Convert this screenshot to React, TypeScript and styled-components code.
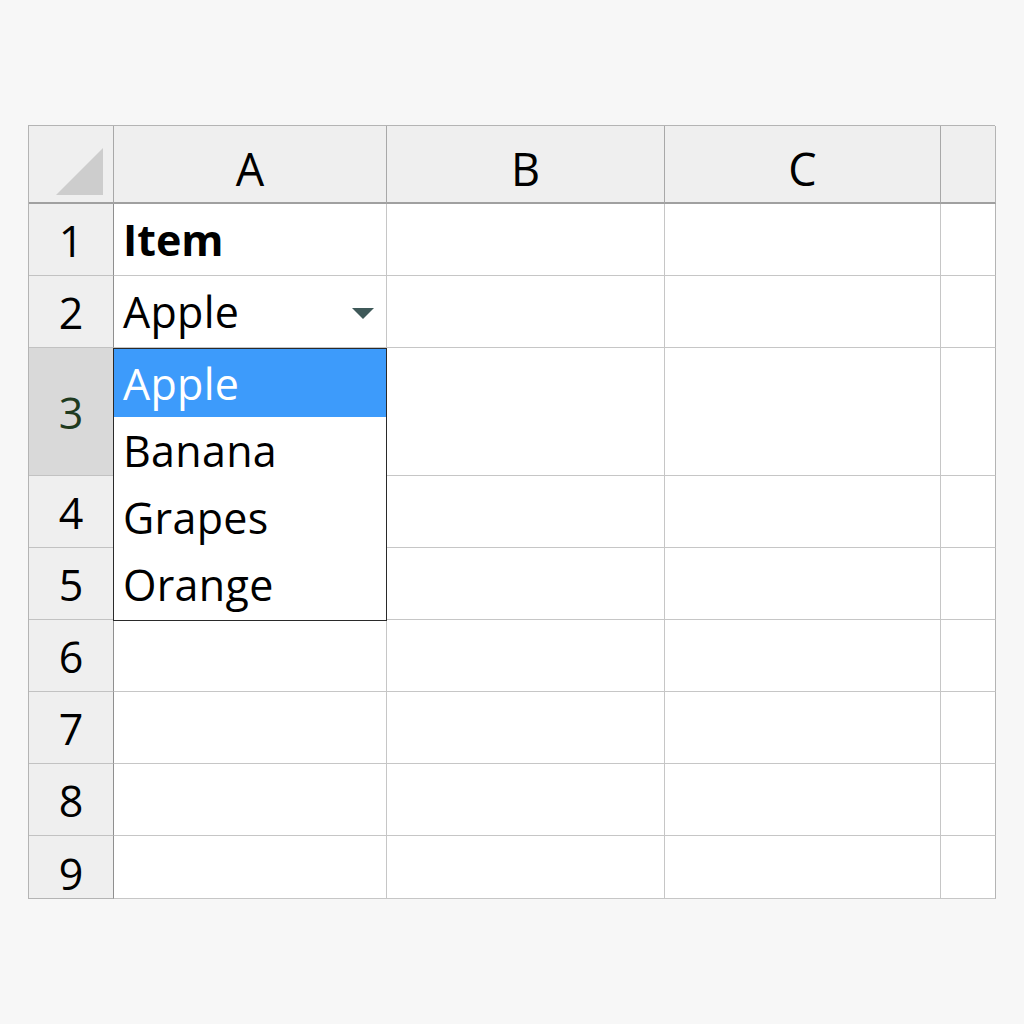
import { Fragment } from "react";
import styled, { createGlobalStyle } from "styled-components";

// === estilos base ===
const GlobalStyle = createGlobalStyle`
	html, body {
		margin: 0;
		padding: 0;
		background: #f7f7f7;
		font-family: "Open Sans", "Noto Sans", sans-serif;
	}
`;

const Page = styled.div`
	width: 1024px;
	height: 1024px;
	padding: 125px 0 0 28px;
	box-sizing: border-box;
`;

const Sheet = styled.div`
	position: relative;
	display: grid;
	grid-template-columns: 85px 273px 278px 276px 55px;
	grid-template-rows: 78px 72px 72px 128px 72px 72px 72px 72px 72px 63px;
	width: 967px;
	box-sizing: border-box;
	border-left: 1px solid #b4b4b4;
	border-top: 1px solid #b4b4b4;
	background: #ffffff;
`;

const Cell = styled.div<{ $bold?: boolean }>`
	box-sizing: border-box;
	border-right: 1px solid #c6c6c6;
	border-bottom: 1px solid #c6c6c6;
	display: flex;
	align-items: center;
	justify-content: space-between;
	padding: 0 12px 0 9px;
	font-size: 43px;
	font-weight: ${(p) => (p.$bold ? 700 : 400)};
	letter-spacing: ${(p) => (p.$bold ? "0" : "0.3px")};
	color: #000;
	background: #fff;
`;

const LastCell = styled(Cell)`
	border-right-color: #b4b4b4;
`;

const ColHeader = styled.div<{ $last?: boolean }>`
	box-sizing: border-box;
	background: #efefef;
	border-right: 1px solid ${(p) => (p.$last ? "#b4b4b4" : "#a8a8a8")};
	border-bottom: 2px solid #a0a0a0;
	display: flex;
	align-items: center;
	justify-content: center;
	padding-top: 8px;
	font-size: 45px;
	color: #000;
`;

const Corner = styled.div`
	box-sizing: border-box;
	background: #efefef;
	border-right: 1px solid #a8a8a8;
	border-bottom: 2px solid #a0a0a0;
	display: flex;
	align-items: flex-end;
	justify-content: flex-end;
	padding: 0 10px 7px 0;
`;

const Triangle = styled.div`
	width: 0;
	height: 0;
	border-left: 47px solid transparent;
	border-bottom: 47px solid #cdcdcd;
`;

const RowHeader = styled.div<{ $active?: boolean; $last?: boolean }>`
	box-sizing: border-box;
	background: ${(p) => (p.$active ? "#d9d9d9" : "#efefef")};
	border-right: 1px solid #8f8f8f;
	border-bottom: 1px solid ${(p) => (p.$last ? "#b4b4b4" : "#c2c2c2")};
	display: flex;
	align-items: center;
	justify-content: center;
	padding-top: ${(p) => (p.$last ? "12px" : "2px")};
	font-size: 43px;
	color: ${(p) => (p.$active ? "#1f3b1f" : "#000")};
`;

const Arrow = styled.div`
	width: 0;
	height: 0;
	border-left: 11px solid transparent;
	border-right: 11px solid transparent;
	border-top: 11px solid #3f5959;
	margin-top: 4px;
`;

const DropList = styled.div`
	position: absolute;
	left: 84px;
	top: 222px;
	width: 274px;
	height: 273px;
	box-sizing: border-box;
	border: 1px solid #2a2a2a;
	background: #fff;
	display: flex;
	flex-direction: column;
`;

const Option = styled.div<{ $selected?: boolean }>`
	height: ${(p) => (p.$selected ? "68px" : "67px")};
	display: flex;
	align-items: center;
	padding-left: 9px;
	font-size: 43px;
	letter-spacing: 0.3px;
	color: ${(p) => (p.$selected ? "#fff" : "#000")};
	background: ${(p) => (p.$selected ? "#3d9bfb" : "transparent")};
`;

const columns = ["A", "B", "C", ""];
const options = ["Apple", "Banana", "Grapes", "Orange"];
const rows = [1, 2, 3, 4, 5, 6, 7, 8, 9];

// === componente principal ===
export default function App() {
	return (
		<>
			<GlobalStyle />
			<Page>
				<Sheet>
					<Corner>
						<Triangle />
					</Corner>
					{columns.map((c, i) => (
						<ColHeader key={i} $last={i === columns.length - 1}>
							{c}
						</ColHeader>
					))}

					{rows.map((r) => (
						<Fragment key={r}>
							<RowHeader $active={r === 3} $last={r === 9}>
								{r}
							</RowHeader>
							<Cell $bold={r === 1}>
								{r === 1 ? "Item" : r === 2 ? "Apple" : ""}
								{r === 2 && <Arrow />}
							</Cell>
							<Cell />
							<Cell />
							<LastCell />
						</Fragment>
					))}

					<DropList>
						{options.map((o, i) => (
							<Option key={o} $selected={i === 0}>
								{o}
							</Option>
						))}
					</DropList>
				</Sheet>
			</Page>
		</>
	);
}
